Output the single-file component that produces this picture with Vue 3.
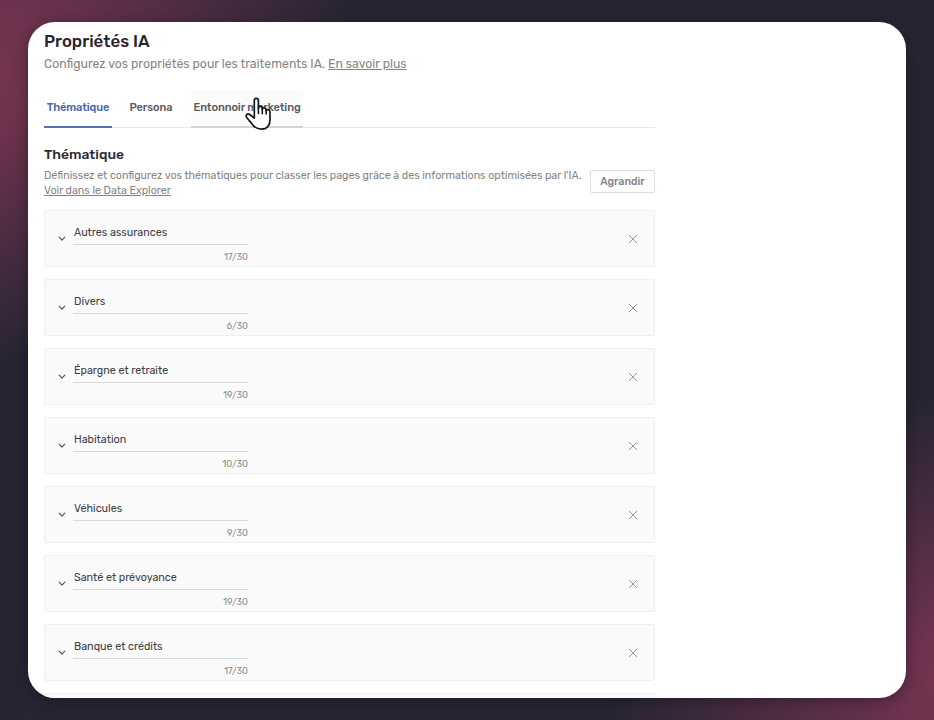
<template>
  <div class="backdrop">
    <div class="window">
      <div class="content">
        <h1 class="page-title">Propriétés IA</h1>
        <p class="page-desc">
          <span>Configurez vos propriétés pour les traitements IA.</span>
          <a class="link">En savoir plus</a>
        </p>

        <div class="tabs">
          <button
            v-for="tab in tabs"
            :key="tab.id"
            class="tab"
            :class="[tab.id, { active: tab.id === activeTab, hovered: tab.id === hoveredTab }]"
            @click="activeTab = tab.id"
          >
            <span class="tab-label">{{ tab.label }}</span>
            <svg v-if="tab.id === hoveredTab" class="pointer" width="28" height="36" viewBox="0 0 28 36">
              <path
                d="M9.3 22.2V4.6C9.3 1.5 13.4 1.5 13.4 4.6V12.2C13.6 9.8 17.2 9.9 17.3 12.4V13.2C17.8 11.1 21.2 11.3 21.2 13.9V14.8C21.9 13.1 25 13.3 25 16V23.5C25 29.5 22.2 33.2 16.4 33.2C11.5 33.2 9.2 31.2 6.6 27.4L1.9 21.7C0 19 2.4 17 4.7 18.5Z"
                fill="#fff" stroke="#15151c" stroke-width="1.7" stroke-linejoin="round"
              />
              <path d="M13.4 11.5V17.5M17.3 12.8V17.7M21.2 14V18" fill="none" stroke="#15151c" stroke-width="1.6" stroke-linecap="round" />
            </svg>
          </button>
        </div>

        <div class="section-header">
          <div class="section-text">
            <h2 class="section-title">Thématique</h2>
            <p class="section-desc">Définissez et configurez vos thématiques pour classer les pages grâce à des informations optimisées par l'IA.</p>
            <a class="link explorer-link">Voir dans le Data Explorer</a>
          </div>
          <button class="expand-btn"><span>Agrandir</span></button>
        </div>

        <div class="theme-list">
          <div v-for="(theme, index) in themes" :key="index" class="theme-item">
            <svg class="chevron" width="8" height="6" viewBox="0 0 8 6">
              <path d="M1.2 1.2L4 4.2L6.8 1.2" />
            </svg>
            <div class="field">
              <div class="field-value">{{ theme.name }}</div>
              <div class="counter">{{ theme.count }}/30</div>
            </div>
            <svg class="remove" width="10" height="10" viewBox="0 0 10 10">
              <path d="M1.2 1.2L8.8 8.8M8.8 1.2L1.2 8.8" />
            </svg>
          </div>
          <div class="theme-item next"></div>
        </div>
      </div>
    </div>
  </div>
</template>

<script setup>
import { ref } from 'vue';

const tabs = [
  { id: 'thematique', label: 'Thématique' },
  { id: 'persona', label: 'Persona' },
  { id: 'entonnoir', label: 'Entonnoir marketing' }
];

const activeTab = ref('thematique');
const hoveredTab = ref('entonnoir');

const themes = ref([
  { name: 'Autres assurances', count: 17 },
  { name: 'Divers', count: 6 },
  { name: 'Épargne et retraite', count: 19 },
  { name: 'Habitation', count: 10 },
  { name: 'Véhicules', count: 9 },
  { name: 'Santé et prévoyance', count: 19 },
  { name: 'Banque et crédits', count: 17 }
]);
</script>

<style>
body {
  overflow: hidden;
}
</style>

<style scoped>
.backdrop {
  box-sizing: border-box;
  width: 934px;
  height: 720px;
  padding: 22px 28px;
  background:
    radial-gradient(ellipse 370px 290px at -10px 70px, #733550 0%, #6f334e 20%, rgba(111, 51, 78, 0) 100%),
    radial-gradient(ellipse 340px 280px at 944px 680px, #733550 0%, #6f334e 15%, rgba(111, 51, 78, 0) 100%),
    #262534;
  font-family: Rubik, Roboto, 'Liberation Sans', sans-serif;
}

.window {
  box-sizing: border-box;
  width: 878px;
  height: 676px;
  padding: 0 16px;
  border-radius: 27px;
  background: #fff;
  overflow: hidden;
  box-shadow: 0 3px 16px rgba(18, 18, 28, 0.5);
}

.content {
  width: 611px;
}

.page-title {
  margin: 0;
  padding-top: 8px;
  font-size: 16.8px;
  line-height: 22px;
  font-weight: 500;
  color: #25252f;
  white-space: nowrap;
}

.page-desc {
  display: flex;
  gap: 3px;
  margin: 4px 0 0;
  font-size: 12.25px;
  line-height: 16px;
  color: #858587;
  white-space: nowrap;
}

.link {
  text-decoration: underline;
  text-underline-offset: 1px;
  cursor: pointer;
}

.tabs {
  display: flex;
  margin-top: 18px;
  height: 37px;
  border-bottom: 1px solid #e9e9eb;
}

.tab {
  position: relative;
  box-sizing: border-box;
  height: 38px;
  padding: 0 0 1px;
  border: none;
  border-bottom: 2px solid transparent;
  background: none;
  font-family: inherit;
  font-size: 11px;
  font-weight: 500;
  letter-spacing: -0.1px;
  color: #5c5c60;
  white-space: nowrap;
  cursor: pointer;
}

.thematique {
  width: 68px;
}

.persona {
  width: 58px;
  margin: 0 11px 0 10px;
}

.entonnoir {
  width: 112px;
}

.tab.active {
  color: #4865a8;
  border-bottom-color: #5272b3;
}

.tab.hovered {
  background: #fbfbfb;
  border-bottom-color: #d3d3d5;
}

.pointer {
  position: absolute;
  left: 54px;
  top: 6px;
}

.section-header {
  display: flex;
  justify-content: space-between;
  align-items: flex-end;
  margin-top: 17px;
}

.section-title {
  margin: 0;
  font-size: 13.9px;
  line-height: 19px;
  font-weight: 500;
  color: #2c2c34;
}

.section-desc {
  margin: 4px 0 0;
  width: 540px;
  font-size: 10.7px;
  line-height: 15px;
  color: #858587;
  white-space: nowrap;
}

.explorer-link {
  display: block;
  font-size: 10.7px;
  line-height: 15px;
  color: #858587;
}

.expand-btn {
  box-sizing: border-box;
  width: 65px;
  height: 23px;
  margin-bottom: 5px;
  padding: 0;
  border: 1px solid #dedee0;
  border-radius: 2px;
  background: #fff;
  font-family: inherit;
  font-size: 10.6px;
  font-weight: 500;
  color: #858587;
}

.theme-list {
  display: flex;
  flex-direction: column;
  gap: 12px;
  margin-top: 12px;
}

.theme-item {
  box-sizing: border-box;
  display: flex;
  align-items: center;
  flex-shrink: 0;
  height: 57px;
  padding: 0 16px 0 13px;
  border: 1px solid #efeff0;
  border-radius: 2px;
  background: #fafafa;
}

.theme-item path {
  fill: none;
  stroke: #4f4f54;
  stroke-width: 1.1;
  stroke-linecap: round;
  stroke-linejoin: round;
}

.theme-item .remove path {
  stroke: #98989b;
  stroke-width: 1;
}

.field {
  width: 175px;
  margin-left: 7px;
  padding-top: 11px;
}

.field-value {
  height: 19px;
  padding-left: 1px;
  border-bottom: 1px solid #dadadc;
  font-size: 10.75px;
  line-height: 15px;
  color: #404045;
}

.counter {
  margin-top: 5px;
  font-size: 9.3px;
  line-height: 14px;
  text-align: right;
  color: #8b8b8e;
}

.remove {
  margin-left: auto;
}
</style>
